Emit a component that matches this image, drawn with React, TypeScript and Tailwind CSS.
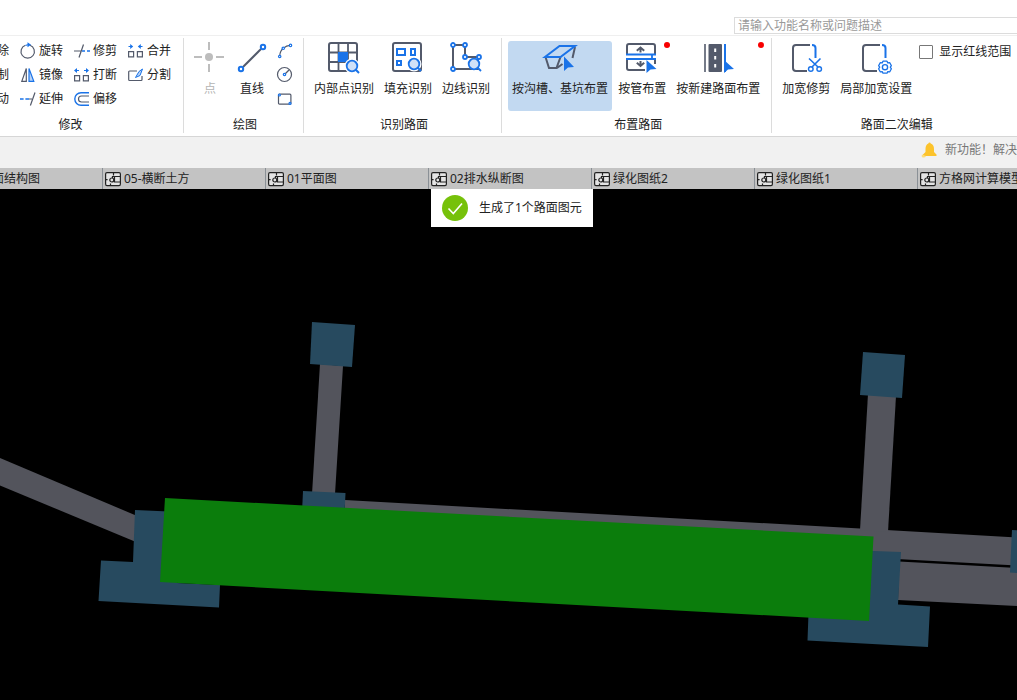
import type { ReactNode } from 'react';

const INK = '#535a6b';
const BLUE = '#1a73e8';

interface SmallTool {
    label: string;
    icon: ReactNode;
}

const SmallIcon = ({ children }: { children: ReactNode }) => (
    <svg className="h-4 w-4 shrink-0 overflow-visible" viewBox="0 0 16 16" fill="none" stroke={INK} strokeWidth={1.2} aria-hidden="true">
        {children}
    </svg>
);

const BigIcon = ({ children }: { children: ReactNode }) => (
    <svg className="h-8 w-8 shrink-0 overflow-visible" viewBox="0 0 32 32" fill="none" stroke={INK} strokeWidth={2} aria-hidden="true">
        {children}
    </svg>
);

const Magnifier = ({ cx, cy }: { cx: number; cy: number }) => (
    <g stroke={BLUE}>
        <circle cx={cx} cy={cy} r={7.5} fill="#fff" stroke="none" />
        <circle cx={cx} cy={cy} r={5.3} fill="#d0e1f8" strokeWidth={1.8} />
        <path d={`M${cx + 3.8} ${cy + 3.8}l3.2 3.2`} />
    </g>
);

const modifyColumns: SmallTool[][] = [
    [
        { label: '删除', icon: <path d="M4 4l8 8M12 4l-8 8" /> },
        { label: '复制', icon: <path d="M2 2h8v8H2zM6 6h8v8H6z" /> },
        { label: '移动', icon: <path d="M8 1v14M1 8h14" /> },
    ],
    [
        {
            label: '旋转',
            icon: (
                <>
                    <path d="M10 2.2A6.7 6.7 0 1 1 5.4 2.2" />
                    <path d="M5.6 2.4Q7 1.6 9 1.8" stroke={BLUE} />
                    <path d="M7.5-.8l3.6 2.6-3.6 2.4z" fill={BLUE} stroke="none" />
                </>
            ),
        },
        {
            label: '镜像',
            icon: (
                <>
                    <path d="M6.3 1.5v12.8H1.8z" />
                    <path d="M9 1.5v12.8h4.8z" fill="#b9d3f7" stroke={BLUE} />
                </>
            ),
        },
        {
            label: '延伸',
            icon: (
                <>
                    <path d="M0 8h3.6M5.4 8h3.6" stroke={BLUE} strokeWidth={1.4} />
                    <path d="M9 8h3M15 1.5l-4.6 13" />
                </>
            ),
        },
    ],
    [
        {
            label: '修剪',
            icon: (
                <>
                    <path d="M0 8h7M9.5 1.5L5 14.5" />
                    <path d="M8 8h3M13 8h3" stroke={BLUE} strokeWidth={1.4} />
                </>
            ),
        },
        {
            label: '打断',
            icon: (
                <>
                    <path d="M.6 8.6h5v5.2h-5zM9.4 8.6h5v5.2h-5z" />
                    <path d="M1 3.5h4M10 3.5h4" stroke={BLUE} />
                    <path d="M0 3.5L3 1v5zM15 3.5L12 1v5z" fill={BLUE} stroke="none" />
                </>
            ),
        },
        {
            label: '偏移',
            icon: (
                <>
                    <path d="M15 1.8H7a6.1 6.1 0 0 0 0 12.4h8" stroke={BLUE} strokeWidth={1.4} />
                    <path d="M15 5H7.500a3 3 0 0 0 0 6H15" />
                </>
            ),
        },
    ],
    [
        {
            label: '合并',
            icon: (
                <>
                    <path d="M.6 8.6h5v5.2h-5zM9.4 8.6h5v5.2h-5z" />
                    <path d="M.5 3.5h3M11.5 3.5h3" stroke={BLUE} />
                    <path d="M5.2 3.5L2.2 1v5zM9.8 3.5L12.8 1v5z" fill={BLUE} stroke="none" />
                </>
            ),
        },
        {
            label: '分割',
            icon: (
                <>
                    <path d="M9 4H1.5Q.7 4 .7 5v7.5q0 1 .8 1h11.7q.8 0 .8-1V9" />
                    <path d="M14.5 2L11 4.5 7.5 10.5 12 8.5z" fill="#b9d3f7" stroke={BLUE} strokeWidth={1} />
                </>
            ),
        },
    ],
];

const drawTools: SmallTool[] = [
    {
        label: '圆弧',
        icon: (
            <>
                <path d="M2.7 13Q3 8 6.3 5.3T13 2.4" />
                <g fill="#fff" stroke={BLUE}>
                    <circle cx={2.7} cy={13.5} r={1.2} />
                    <circle cx={6.3} cy={5.3} r={1.2} />
                    <circle cx={13.5} cy={2.4} r={1.2} />
                </g>
            </>
        ),
    },
    {
        label: '圆',
        icon: (
            <>
                <circle cx={7.5} cy={7.5} r={7} />
                <path d="M8 7l4-4" />
                <circle cx={7.5} cy={7.5} r={1.2} fill="#fff" stroke={BLUE} />
            </>
        ),
    },
    {
        label: '矩形',
        icon: (
            <>
                <rect x={1.5} y={3.2} width={12.4} height={10} rx={1} />
                <g fill="#fff" stroke={BLUE}>
                    <circle cx={2.4} cy={4} r={1} />
                    <circle cx={13} cy={12.4} r={1} />
                </g>
            </>
        ),
    },
];

interface BigToolProps {
    label: string;
    children: ReactNode;
    active?: boolean;
    disabled?: boolean;
    badge?: boolean;
}

function BigTool({ label, children, active, disabled, badge }: BigToolProps) {
    return (
        <button
            type="button"
            disabled={disabled}
            aria-pressed={active}
            className={`relative flex h-[70px] shrink-0 flex-col items-center gap-[6px] rounded-[3px] px-1 pt-px whitespace-nowrap ${
                active ? 'bg-[#c2d9f1]' : ''
            } ${disabled ? 'text-[#b4b4b4]' : ''}`}
        >
            <BigIcon>{children}</BigIcon>
            <span>{label}</span>
            {badge && <span className="absolute top-px right-0 h-[6px] w-[6px] rounded-full bg-[#f80000]" />}
        </button>
    );
}

interface GroupProps {
    title: string;
    className?: string;
    children: ReactNode;
}

function Group({ title, className = 'pr-[7px] pl-[6px]', children }: GroupProps) {
    return (
        <section className={`mt-[2px] mb-[3px] flex shrink-0 flex-col border-r border-[#dcdcdc] pt-[3px] ${className}`}>
            <div className="flex h-[70px] gap-[2px]">{children}</div>
            <h2 className="mt-[6px] pl-[4px] text-center leading-4">{title}</h2>
        </section>
    );
}

const TabIcon = () => (
    <svg className="h-4 w-4 shrink-0" viewBox="0 0 16 16" fill="#e4e4e4" stroke="#222" strokeWidth={1.2} aria-hidden="true">
        <path d="M2 1.600h12q1.400 0 1.400 1.400v10q0 1.600-1.400 1.600H2Q.6 14.600.6 13V3Q.6 1.600 2 1.600z" />
        <path d="M8.500 1.600v3M.6 8.600h2M5.500 14.600v-2" fill="none" />
        <path d="M9.500 5.500h5.900v5.500H9.500z" />
        <path d="M9.500 5.500H7.500v2" fill="none" />
        <circle cx={6.8} cy={9} r={2} />
    </svg>
);

const tabs = ['03_路面结构图', '05-横断土方', '01平面图', '02排水纵断图', '绿化图纸2', '绿化图纸1', '方格网计算模型'];

function Ribbon() {
    return (
        <div className="flex overflow-hidden border-b border-[#d6d6d6] bg-white">
            <Group title="修改" className="-ml-[41px] pr-3 pl-[7px]">
                <div className="flex gap-[11px]">
                    {modifyColumns.map((column) => (
                        <div key={column[0].label} className="flex flex-col gap-1">
                            {column.map((tool) => (
                                <button key={tool.label} type="button" className="flex h-5 items-center gap-[3px] whitespace-nowrap">
                                    <SmallIcon>{tool.icon}</SmallIcon>
                                    <span className="leading-5">{tool.label}</span>
                                </button>
                            ))}
                        </div>
                    ))}
                </div>
            </Group>

            <Group title="绘图">
                <BigTool label="点" disabled>
                    <g stroke="#bdbdbd">
                        <path d="M0 15h8M22 15h8M15 0v8M15 22v8" />
                        <circle cx={15} cy={15} r={4} fill="#bdbdbd" stroke="none" />
                    </g>
                </BigTool>
                <BigTool label="直线">
                    <path d="M7 25L25 7" />
                    <g fill="#fff" stroke={BLUE}>
                        <circle cx={5} cy={27} r={2.2} />
                        <circle cx={27} cy={5} r={2.2} />
                    </g>
                </BigTool>
                <div className="flex flex-col gap-1 px-[3px]">
                    {drawTools.map((tool) => (
                        <button key={tool.label} type="button" aria-label={tool.label} className="flex h-5 items-center">
                            <SmallIcon>{tool.icon}</SmallIcon>
                        </button>
                    ))}
                </div>
            </Group>

            <Group title="识别路面">
                <BigTool label="内部点识别">
                    <rect x={1} y={1} width={28} height={28} rx={2} />
                    <path d="M10.5 1v28M20 1v28M1 10.5h28M1 20h28" strokeWidth={1.8} />
                    <rect x={10} y={10} width={10} height={10} fill={BLUE} stroke="none" />
                    <Magnifier cx={24} cy={24} />
                </BigTool>
                <BigTool label="填充识别">
                    <rect x={1} y={1} width={28} height={28} rx={2} />
                    <g stroke={BLUE}>
                        <rect x={5} y={7} width={8} height={6} />
                        <rect x={19} y={7} width={4} height={6} />
                        <rect x={5} y={19} width={4} height={4} />
                    </g>
                    <Magnifier cx={22} cy={22} />
                </BigTool>
                <BigTool label="边线识别">
                    <path d="M3 3h12v12h13v12H3z" />
                    <g fill="#fff" stroke={BLUE} strokeWidth={1.8}>
                        <circle cx={3} cy={3} r={2} />
                        <circle cx={15} cy={3} r={2} />
                        <circle cx={15} cy={15} r={2} />
                        <circle cx={29} cy={15} r={2} />
                        <circle cx={3} cy={27} r={2} />
                        <circle cx={24} cy={22} r={5.3} fill="#d0e1f8" />
                        <path d="M28 26l3 3" />
                    </g>
                </BigTool>
            </Group>

            <Group title="布置路面">
                <BigTool label="按沟槽、基坑布置" active>
                    <path d="M1.5 15L5 26h7.5L16.500 15M13 26l5.500-4M31 5l-2.500 11" />
                    <path d="M15.500 4H31L16.500 15H1z" stroke={BLUE} />
                    <path d="M20 14.500V29l4-3.500 6-.5z" fill={BLUE} stroke="none" />
                </BigTool>
                <BigTool label="按管布置" badge>
                    <path d="M1 12V4q0-2 2-2h24q2 0 2 2v8M1 18v8q0 2 2 2h16M29 18v4" />
                    <path d="M0 12.5h30M0 17h30M26 12.5V17" stroke={BLUE} strokeWidth={1.8} />
                    <path d="M14.5 10.5V6M10.8 8.800l3.700-3.200 3.700 3.200M14.5 19v4.500M10.8 20.800l3.700 3.200 3.700-3.200" />
                    <path d="M20.5 18v13l4-3.5 6-.5z" fill={BLUE} stroke="none" />
                </BigTool>
                <BigTool label="按新建路面布置" badge>
                    <path d="M3 2v28" strokeWidth={1.6} />
                    <rect x={6.5} y={2} width={13.5} height={28} rx={1} fill={INK} stroke="none" />
                    <path d="M13.2 6.5v3.5M13.2 14v3.5M13.2 22v3.5" stroke="#fff" />
                    <path d="M23 2v28" stroke={BLUE} />
                    <path d="M22 18v13l4-3.5 6-.5z" fill={BLUE} stroke="none" />
                </BigTool>
            </Group>

            <Group title="路面二次编辑" className="pr-2 pl-[6px]">
                <BigTool label="加宽修剪">
                    <path d="M20 3H6Q3 3 3 6v20q0 3 3 3h11" />
                    <g stroke={BLUE}>
                        <path d="M22 3q3.5 0 3.5 3v10" />
                        <path d="M19 16.5l9 8.5M30.5 16.5L22 25" strokeWidth={1.6} />
                        <circle cx={20.8} cy={27} r={2.3} strokeWidth={1.4} />
                        <circle cx={29.2} cy={27} r={2.3} strokeWidth={1.4} />
                    </g>
                </BigTool>
                <BigTool label="局部加宽设置">
                    <path d="M20 3H6Q3 3 3 6v20q0 3 3 3h11" />
                    <g stroke={BLUE}>
                        <path d="M22 3q3.5 0 3.5 3v10" />
                        <path
                            d="M23 19.2h4l.8 1.7 2-.2 1.6 3-1.1 1.5 1.1 1.6-1.6 3-2-.2-.8 1.6h-4l-.8-1.6-2 .2-1.6-3 1.1-1.6-1.1-1.5 1.6-3 2 .2z"
                            strokeWidth={1.3}
                            strokeLinejoin="round"
                        />
                        <circle cx={25} cy={25.2} r={2.6} strokeWidth={1.4} />
                    </g>
                </BigTool>
                <label className="ml-px flex h-[22px] items-center gap-[6px] self-start whitespace-nowrap">
                    <input type="checkbox" className="h-[14px] w-[14px] appearance-none rounded-[1px] border border-[#777] bg-white" />
                    显示红线范围
                </label>
            </Group>
        </div>
    );
}

function Drawing() {
    return (
        <svg className="block w-full flex-1" viewBox="0 189 1017 511" preserveAspectRatio="xMidYMin slice" role="img" aria-label="平面图">
            <g fill="#53545c">
                <path d="M0 458L136 515.5V542L0 485.5z" />
                <path d="M320 364l23 2-8 128h-23z" />
                <path d="M345 500l515 28.5 157 9V565.5L345 529z" />
                <path d="M868 394l28 2-8 136-28-2z" />
                <path d="M899 561.5l118 6.5V606l-119-6z" />
            </g>
            <g fill="#274a5f">
                <path d="M312 322l43 3-3 42-42-3z" />
                <path d="M863 352l42 3-3 43-42-3z" />
                <path d="M303 491l42.5 2-1 22-42.5-2z" />
                <path d="M1012 530l5 .3V573l-7-.5z" />
                <path d="M135 510l45 2-3 71 43 2-1 22.5-120.5-6.5 2.5-40.500 32 1.500z" />
                <path d="M860 550.5l41 1.5-3 52.5 32 2-2 40.5-120.5-6.5L809 600l50 5z" />
            </g>
            <path d="M165 498l708.5 38.5L869 621l-709-39z" fill="#0b7d0c" />
        </svg>
    );
}

export default function App() {
    return (
        <div className="flex min-h-screen flex-col overflow-hidden bg-black font-['Noto_Sans','Noto_Sans_CJK_SC',sans-serif] text-xs leading-[18px] text-[#222]">
            <header className="flex h-9 items-end justify-end border-b border-[#efefef] bg-white pb-px">
                <input
                    type="search"
                    aria-label="搜索"
                    placeholder="请输入功能名称或问题描述"
                    className="h-[17px] w-[283px] border-y border-l border-[#dcdcdc] pl-[3px] leading-[15px] outline-none placeholder:text-[#999]"
                />
            </header>

            <Ribbon />

            <div className="flex h-[31px] items-center justify-end gap-2 overflow-hidden bg-[#f1f1f1] pb-[6px] text-[#777]">
                <svg className="h-4 w-4 shrink-0" viewBox="0 0 16 16" aria-hidden="true">
                    <path d="M8.5.5q1 0 1.200 1Q13 2.500 13 7v3l2.500 2.500V14H2v-1.500L4.500 10V7q0-4.500 2.900-5.500.2-1 1.100-1z" fill="#fcc32c" />
                    <path d="M1 12.500l4 1.500q-1 2-3 1.500t-1-3z" fill="#fddc7c" />
                </svg>
                <p className="whitespace-nowrap">新功能！解决</p>
            </div>

            <nav className="flex h-[21px] overflow-hidden bg-[#c3c3c3]">
                <div className="-ml-[60px] flex">
                    {tabs.map((tab) => (
                        <button
                            key={tab}
                            type="button"
                            className="flex w-[163px] shrink-0 items-center gap-[3px] border-r border-[#8a9096] pl-[2px] whitespace-nowrap"
                        >
                            <TabIcon />
                            {tab}
                        </button>
                    ))}
                </div>
            </nav>

            <main className="relative flex flex-1 flex-col">
                <Drawing />
                <div
                    role="status"
                    className="absolute top-0 left-[431px] flex h-[38px] items-center gap-[11px] bg-white px-[11px] whitespace-nowrap"
                >
                    <svg className="h-[26px] w-[26px]" viewBox="0 0 26 26" aria-hidden="true">
                        <circle cx={13} cy={13} r={13} fill="#76c10a" />
                        <path d="M6.5 13.5l4.8 5L20 8.5" fill="none" stroke="#fff" strokeWidth={1.6} />
                    </svg>
                    生成了1个路面图元
                </div>
            </main>
        </div>
    );
}
